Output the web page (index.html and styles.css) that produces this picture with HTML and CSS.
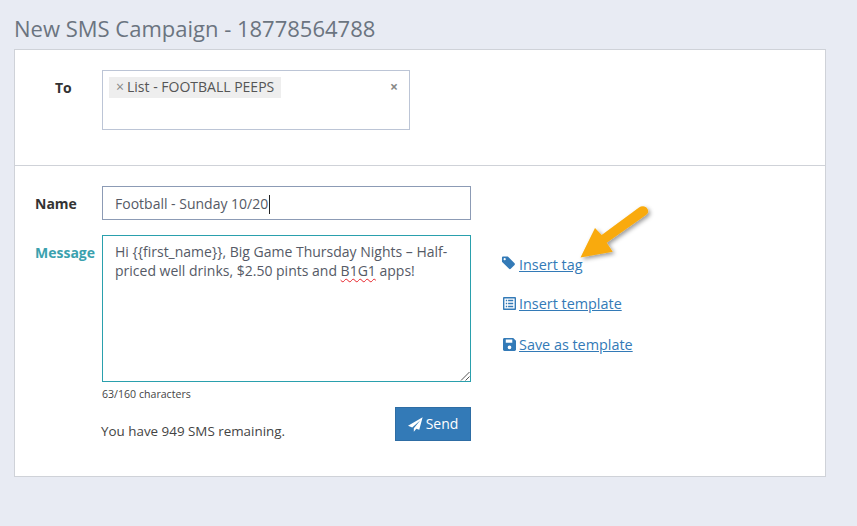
FILE: index.html
```html
<!DOCTYPE html>
<html lang="en">
<head>
<meta charset="utf-8">
<title>New SMS Campaign</title>
<link rel="stylesheet" href="styles.css">
</head>
<body>
<h1 class="title">New SMS Campaign - 18778564788</h1>
<main class="card">
  <section class="sec-to">
    <div class="label label-to">To</div>
    <div class="select">
      <span class="chip"><span class="chip-x">×</span>List - FOOTBALL PEEPS</span>
      <span class="clear">×</span>
    </div>
  </section>
  <section class="sec-form">
    <div class="row-name">
      <div class="label label-name">Name</div>
      <div class="input">Football - Sunday 10/20<span class="caret"></span></div>
    </div>
    <div class="row-msg">
      <div class="label label-msg">Message</div>
      <div class="msg-col">
        <div class="textarea">Hi {{first_name}}, Big Game Thursday Nights – Half-priced well drinks, $2.50 pints and <span class="spell">B1G1</span> apps!
          <svg class="grip" width="10" height="10" viewBox="0 0 10 10"><path d="M1 9.500 9.500 1M5.500 9.500 9.500 5.500" stroke="#555" fill="none"/></svg>
        </div>
        <div class="count">63/160 characters</div>
        <div class="foot">
          <span class="remain">You have 949 SMS remaining.</span>
          <button class="send" type="button">
            <svg width="15" height="15" viewBox="0 0 16 16"><path d="M15.600.2 0 9.200l4.500 1.900L13.200 3.400 6.200 12v3.600l2.700-3.200 3.100 1.300z" fill="#fff"/></svg>
            <span class="send-text">Send</span>
          </button>
        </div>
      </div>
      <ul class="links">
        <li><svg class="ico-tag" width="15" height="14" viewBox="0 0 15 15"><path d="M.5 1.800C.5 1.100 1.100.5 1.800.5h4.300c.4 0 .7.2 1 .4l6.900 6.900c.5.5.5 1.300 0 1.800l-4.100 4.100c-.5.5-1.300.5-1.800 0L1 6.800c-.3-.3-.5-.6-.5-1zM3.400 2.200a1.200 1.200 0 1 0 0 2.400 1.200 1.200 0 0 0 0-2.400z" fill="#337ab7" fill-rule="evenodd"/></svg><a href="#">Insert tag</a></li>
        <li class="link-mid"><svg class="ico-box" width="13" height="13" viewBox="0 0 14 14"><path d="M0 1.200C0 .5.5 0 1.200 0h11.600c.7 0 1.200.5 1.200 1.200v11.600c0 .7-.5 1.200-1.200 1.200H1.200C.5 14 0 13.500 0 12.800zM1.500 1.500v11h11v-11zM3 3h1.500v1.500H3zM5.500 3H11v1.500H5.500zM3 6.200h1.500v1.500H3zM5.500 6.200H11v1.500H5.500zM3 9.500h1.500V11H3zM5.500 9.500H11V11H5.500z" fill="#337ab7" fill-rule="evenodd"/></svg><a href="#">Insert template</a></li>
        <li><svg class="ico-box" width="13" height="13" viewBox="0 0 14 14"><path d="M1.500 0H11l3 3v9.500c0 .8-.7 1.500-1.500 1.500h-11C.7 14 0 13.300 0 12.500v-11C0 .7.7 0 1.500 0zM3 1.500V5h7V1.500zM7 8a2 2 0 1 0 0 4 2 2 0 0 0 0-4z" fill="#337ab7" fill-rule="evenodd"/></svg><a href="#">Save as template</a></li>
      </ul>
    </div>
  </section>
</main>
<svg class="arrow" width="90" height="70" viewBox="0 0 90 70">
  <defs><filter id="s" x="-30%" y="-30%" width="170%" height="170%"><feDropShadow dx="2" dy="2" stdDeviation="2" flood-color="#000" flood-opacity=".4"/></filter></defs>
  <path d="M9.500 53.500 24 24l6.700 7L68 3.500c3-2 7-1.500 8.500 1.500 1.500 2.500.5 4.500-1.500 6L35.700 38.700l6 9z" fill="#f9aa0a" filter="url(#s)"/>
</svg>
</body>
</html>
```
FILE: styles.css
```css
* { box-sizing: border-box; }
html, body { margin: 0; padding: 0; }
body {
  width: 857px;
  height: 526px;
  overflow: hidden;
  position: relative;
  background: #e8ebf3;
  font-family: "Open Sans", sans-serif;
  font-size: 14px;
  color: #555a66;
  padding: 14px 31px 0 14px;
}
.title {
  margin: 0 0 5px;
  height: 30px;
  font-size: 22px;
  line-height: 28px;
  font-weight: 400;
  color: #6b7480;
}
.card {
  height: 428px;
  background: #fff;
  border: 1px solid #cfd2d8;
}
.sec-to {
  display: flex;
  height: 116px;
  padding: 20px 0 0 40px;
  border-bottom: 1px solid #cfd2d8;
}
.label { font-weight: 700; color: #333; }
.label-to { width: 47px; padding-top: 8px; line-height: 19px; }
.select {
  position: relative;
  width: 308px;
  height: 60px;
  padding: 6px;
  border: 1px solid #bcc5d6;
}
.chip {
  display: inline-block;
  height: 21px;
  padding: 0 7px;
  background: #eee;
  line-height: 20px;
  color: #555;
}
.chip-x { margin-right: 3px; color: #888; }
.clear {
  position: absolute;
  top: 5px;
  right: 11px;
  font-weight: 700;
  line-height: 21px;
  color: #888;
}
.sec-form { padding: 20px 0 0 20px; }
.row-name { display: flex; height: 34px; margin-bottom: 15px; }
.label-name { width: 67px; line-height: 35px; }
.input {
  width: 369px;
  height: 34px;
  padding: 0 12px;
  border: 1px solid #8c9bb5;
  line-height: 33px;
}
.caret {
  display: inline-block;
  width: 1px;
  height: 19px;
  margin-left: 1px;
  vertical-align: -5px;
  background: #222;
}
.row-msg { display: flex; }
.label-msg { width: 67px; padding-top: 8px; line-height: 19px; color: #3ba1ae; }
.msg-col { width: 369px; }
.textarea {
  position: relative;
  height: 147px;
  padding: 6px 12px;
  border: 1px solid #2aa0ad;
  line-height: 19px;
}
.spell { text-decoration: underline wavy #e8232a 1px; text-underline-offset: 2px; }
.grip { position: absolute; right: 0; bottom: 0; }
.count { margin-top: 5px; font-size: 10.600px; line-height: 15px; color: #444; }
.foot {
  display: flex;
  justify-content: space-between;
  margin-top: 5px;
}
.remain { margin: 15px 0 0 -1px; font-size: 13.400px; line-height: 18px; color: #444; }
.send {
  display: flex;
  align-items: center;
  justify-content: center;
  gap: 3px;
  width: 76px;
  height: 34px;
  padding: 0;
  background: #337ab7;
  border: 1px solid #2e6da4;
  color: #fff;
  font: 14px "Open Sans", sans-serif;
}
.send-text { margin-top: -2px; }
.links {
  list-style: none;
  margin: 0;
  padding: 19px 0 0 30px;
  font-size: 14.400px;
}
.links li {
  display: flex;
  align-items: center;
  gap: 3px;
  height: 20px;
  margin-bottom: 20px;
}
.links .link-mid { margin: -1px 0 21px; }
.links svg { flex: none; }
.ico-tag { margin-top: -2px; }
.ico-box { margin-left: 2px; }
.links a { color: #337ab7; text-decoration: underline; }
.arrow { position: absolute; left: 571px; top: 204px; }
```
